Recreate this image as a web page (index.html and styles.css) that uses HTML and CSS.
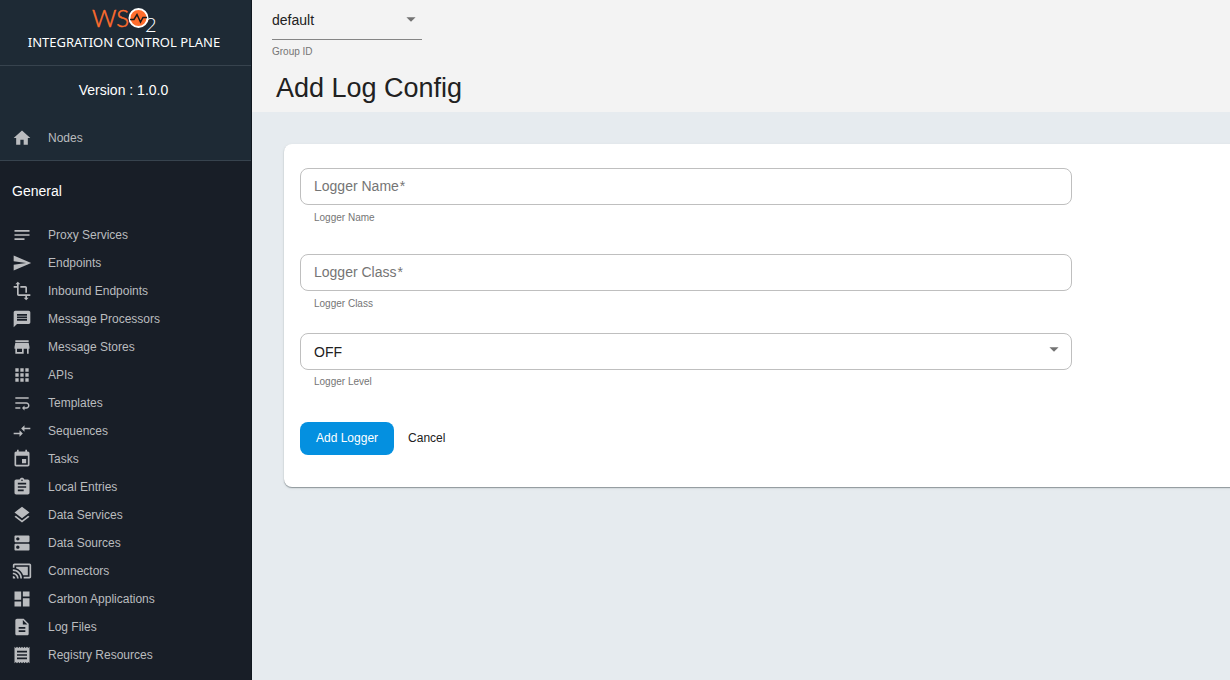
FILE: index.html
```html
<!DOCTYPE html>
<html lang="en">
<head>
<meta charset="utf-8">
<title>Add Log Config - Integration Control Plane</title>
<link rel="stylesheet" href="styles.css">
</head>
<body>
<div class="app">
  <nav class="sidebar" aria-label="Main">
    <div class="brand">
      <svg class="logo" viewBox="0 0 68 35" role="img" aria-label="WSO2">
        <text class="logo-ws" x="2" y="27">WS</text>
        <text class="logo-two" x="55" y="32">2</text>
        <circle cx="48.500" cy="18" r="9" fill="#ff6d2d" stroke="#fff" stroke-width="2"/>
        <path d="M40 19.500h4l3-5 3.500 7.500 2.500-4.500h4" fill="none" stroke="#1a1a1a" stroke-width="1.500"/>
      </svg>
      <div class="product">INTEGRATION CONTROL PLANE</div>
    </div>
    <div class="version">Version : 1.0.0</div>
    <a class="item home" href="#"><svg class="icon" viewBox="0 0 24 24"><path d="M10 20v-6h4v6h5v-8h3L12 3 2 12h3v8z"/></svg>Nodes</a>
    <h2 class="group">General</h2>
    <div class="items">
      <a class="item" href="#"><svg class="icon" viewBox="0 0 24 24"><path d="M3 18h12v-2H3v2zM3 6v2h18V6H3zm0 7h18v-2H3v2z"/></svg>Proxy Services</a>
      <a class="item" href="#"><svg class="icon" viewBox="0 0 24 24"><path d="M2.010 21L23 12 2.010 3 2 10l15 2-15 2z"/></svg>Endpoints</a>
      <a class="item" href="#"><svg class="icon" viewBox="0 0 24 24"><path d="M22 18v-2H8V4h2L7 1 4 4h2v2H2v2h4v8c0 1.100.9 2 2 2h8v2h-2l3 3 3-3h-2v-2h4zM10 8h6v6h2V8c0-1.100-.9-2-2-2h-6v2z"/></svg>Inbound Endpoints</a>
      <a class="item" href="#"><svg class="icon" viewBox="0 0 24 24"><path d="M20 2H4c-1.100 0-1.990.9-1.990 2L2 22l4-4h14c1.100 0 2-.9 2-2V4c0-1.100-.9-2-2-2zm-2 12H6v-2h12v2zm0-3H6V9h12v2zm0-3H6V6h12v2z"/></svg>Message Processors</a>
      <a class="item" href="#"><svg class="icon" viewBox="0 0 24 24"><path d="M20 4H4v2h16V4zm1 10v-2l-1-5H4l-1 5v2h1v6h10v-6h4v6h2v-6h1zm-9 4H6v-4h6v4z"/></svg>Message Stores</a>
      <a class="item" href="#"><svg class="icon" viewBox="0 0 24 24"><path d="M4 8h4V4H4v4zm6 12h4v-4h-4v4zm-6 0h4v-4H4v4zm0-6h4v-4H4v4zm6 0h4v-4h-4v4zm6-10v4h4V4h-4zm-6 4h4V4h-4v4zm6 6h4v-4h-4v4zm0 6h4v-4h-4v4z"/></svg>APIs</a>
      <a class="item" href="#"><svg class="icon" viewBox="0 0 24 24"><path d="M4 19h6v-2H4v2zM20 5H4v2h16V5zm-3 6H4v2h13.250c1.100 0 2 .9 2 2s-.9 2-2 2H15v-2l-3 3 3 3v-2h2c2.210 0 4-1.790 4-4s-1.790-4-4-4z"/></svg>Templates</a>
      <a class="item" href="#"><svg class="icon" viewBox="0 0 24 24"><path d="M9.010 14H2v2h7.010v3L13 15l-3.990-4v3zm5.980-1v-3H22V8h-7.010V5L11 9l3.990 4z"/></svg>Sequences</a>
      <a class="item" href="#"><svg class="icon" viewBox="0 0 24 24"><path d="M17 12h-5v5h5v-5zM16 1v2H8V1H6v2H5c-1.110 0-1.990.9-1.990 2L3 19c0 1.100.89 2 2 2h14c1.100 0 2-.9 2-2V5c0-1.100-.9-2-2-2h-1V1h-2zm3 18H5V8h14v11z"/></svg>Tasks</a>
      <a class="item" href="#"><svg class="icon" viewBox="0 0 24 24"><path d="M19 3h-4.180C14.400 1.840 13.300 1 12 1c-1.300 0-2.400.84-2.820 2H5c-1.100 0-2 .9-2 2v14c0 1.100.9 2 2 2h14c1.100 0 2-.9 2-2V5c0-1.100-.9-2-2-2zm-7 0c.55 0 1 .45 1 1s-.45 1-1 1-1-.45-1-1 .45-1 1-1zm2 14H7v-2h7v2zm3-4H7v-2h10v2zm0-4H7V7h10v2z"/></svg>Local Entries</a>
      <a class="item" href="#"><svg class="icon" viewBox="0 0 24 24"><path d="M11.990 18.540l-7.370-5.730L3 14.070l9 7 9-7-1.630-1.270-7.380 5.740zM12 16l7.360-5.730L21 9l-9-7-9 7 1.630 1.270L12 16z"/></svg>Data Services</a>
      <a class="item" href="#"><svg class="icon" viewBox="0 0 24 24"><path d="M20 13H4c-.55 0-1 .45-1 1v6c0 .55.45 1 1 1h16c.55 0 1-.45 1-1v-6c0-.55-.45-1-1-1zM7 19c-1.100 0-2-.9-2-2s.9-2 2-2 2 .9 2 2-.9 2-2 2zM20 3H4c-.55 0-1 .45-1 1v6c0 .55.45 1 1 1h16c.55 0 1-.45 1-1V4c0-.55-.45-1-1-1zM7 9c-1.100 0-2-.9-2-2s.9-2 2-2 2 .9 2 2-.9 2-2 2z"/></svg>Data Sources</a>
      <a class="item" href="#"><svg class="icon" viewBox="0 0 24 24"><path d="M1 18v3h3c0-1.660-1.340-3-3-3zm0-4v2c2.760 0 5 2.240 5 5h2c0-3.870-3.130-7-7-7zm18-7H5v1.630c3.960 1.280 7.090 4.410 8.370 8.370H19V7zM1 10v2c4.970 0 9 4.030 9 9h2c0-6.080-4.930-11-11-11zm20-7H3c-1.100 0-2 .9-2 2v3h2V5h18v14h-7v2h7c1.100 0 2-.9 2-2V5c0-1.100-.9-2-2-2z"/></svg>Connectors</a>
      <a class="item" href="#"><svg class="icon" viewBox="0 0 24 24"><path d="M3 13h8V3H3v10zm0 8h8v-6H3v6zm10 0h8V11h-8v10zm0-18v6h8V3h-8z"/></svg>Carbon Applications</a>
      <a class="item" href="#"><svg class="icon" viewBox="0 0 24 24"><path d="M14 2H6c-1.100 0-1.990.9-1.990 2L4 20c0 1.100.89 2 1.990 2H18c1.100 0 2-.9 2-2V8l-6-6zm2 16H8v-2h8v2zm0-4H8v-2h8v2zm-3-5V3.500L18.500 9H13z"/></svg>Log Files</a>
      <a class="item" href="#"><svg class="icon" viewBox="0 0 24 24"><path d="M18 17H6v-2h12v2zm0-4H6v-2h12v2zm0-4H6V7h12v2zM3 22l1.500-1.500L6 22l1.500-1.500L9 22l1.500-1.500L12 22l1.500-1.500L15 22l1.500-1.500L18 22l1.500-1.500L21 22V2l-1.500 1.500L18 2l-1.500 1.500L15 2l-1.500 1.500L12 2l-1.500 1.500L9 2 7.500 3.500 6 2 4.500 3.500 3 2v20z"/></svg>Registry Resources</a>
    </div>
  </nav>
  <div class="page">
    <header class="topbar">
      <div class="group-picker">
        <div class="select-wrap">
          <select class="group-select" id="group"><option>default</option></select>
          <svg class="arrow" viewBox="0 0 24 24"><path d="M7 10l5 5 5-5z"/></svg>
        </div>
        <label class="hint" for="group">Group ID</label>
      </div>
      <h1 class="title">Add Log Config</h1>
    </header>
    <main class="content">
      <form class="card">
        <div class="fields">
          <div class="field">
            <div class="control">
              <input class="box" id="name" type="text" required aria-describedby="name-hint">
              <label class="floating" for="name">Logger Name<span class="star">*</span></label>
            </div>
            <div class="hint" id="name-hint">Logger Name</div>
          </div>
          <div class="field">
            <div class="control">
              <input class="box" id="class" type="text" required aria-describedby="class-hint">
              <label class="floating" for="class">Logger Class<span class="star">*</span></label>
            </div>
            <div class="hint" id="class-hint">Logger Class</div>
          </div>
        </div>
        <div class="field level">
          <div class="control">
            <select class="box" id="level"><option>OFF</option></select>
            <svg class="arrow" viewBox="0 0 24 24"><path d="M7 10l5 5 5-5z"/></svg>
          </div>
          <label class="hint" for="level">Logger Level</label>
        </div>
        <div class="actions">
          <button class="btn primary" type="submit">Add Logger</button>
          <button class="btn" type="button">Cancel</button>
        </div>
      </form>
    </main>
  </div>
</div>
</body>
</html>
```

FILE: styles.css
```css
* { box-sizing: border-box; }

body {
  margin: 0;
  font-family: "Liberation Sans", Arial, Helvetica, sans-serif;
  font-size: 14px;
  color: #212121;
}

.app {
  display: flex;
  min-height: 100vh;
}

/* Sidebar */
.sidebar {
  flex: 0 0 252px;
  background: #181e27;
  border-right: 1px solid #10171f;
  color: #fff;
}

.brand {
  height: 66px;
  padding-right: 3px;
  display: flex;
  flex-direction: column;
  align-items: center;
  background: #1e2a35;
  border-bottom: 1px solid #37434e;
}

.logo {
  width: 68px;
  height: 35px;
  flex: none;
}

.logo-ws {
  font: 300 24px Lato, sans-serif;
  fill: #ff6d2d;
  stroke: #ff6d2d;
  stroke-width: 0.5px;
}

.logo-two {
  font: 300 20px Lato, sans-serif;
  fill: #fff;
}

.product {
  font: 13px/14px "Noto Sans", sans-serif;
  white-space: nowrap;
}

.version {
  height: 50px;
  padding-right: 4px;
  line-height: 49px;
  text-align: center;
  background: #1e2a35;
}

.item {
  display: flex;
  align-items: center;
  gap: 16px;
  height: 28px;
  padding: 0 12px;
  font-size: 12px;
  color: #babcbf;
  text-decoration: none;
}

.icon {
  width: 20px;
  height: 20px;
  flex: none;
  fill: currentColor;
}

.home {
  height: 45px;
  background: #1e2a35;
  border-bottom: 1px solid #37434e;
}

.group {
  margin: 0;
  padding: 0 12px;
  height: 60px;
  line-height: 60px;
  font-size: 14px;
  font-weight: 400;
}

/* Page */
.page {
  flex: 1;
  min-width: 0;
  overflow: hidden;
  background: #e6ebef;
}

.topbar {
  height: 112px;
  padding: 0 20px;
  background: #f3f3f3;
}

.group-picker {
  width: 150px;
}

.select-wrap,
.control {
  position: relative;
}

.group-select {
  display: block;
  width: 100%;
  height: 40px;
  padding: 0 24px 0 0;
  border: 0;
  border-bottom: 1px solid #858585;
  appearance: none;
  background: none;
  font: inherit;
  color: inherit;
}

.arrow {
  position: absolute;
  top: 8px;
  right: 0;
  width: 22px;
  height: 22px;
  fill: #737373;
  pointer-events: none;
}

.hint {
  display: block;
  font-size: 10px;
  line-height: 24px;
  color: #757575;
}

.title {
  margin: 0;
  padding-left: 4px;
  font-size: 27px;
  line-height: 48px;
  font-weight: 400;
}

.content {
  padding: 32px;
}

.card {
  min-width: 1000px;
  padding: 24px 16px 32px;
  background: #fff;
  border-radius: 8px;
  box-shadow: 0 1px 1px #8f979c, 0 1px 3px #d0d6da;
}

.fields {
  display: grid;
  gap: 23px;
  margin-bottom: 16px;
}

.field {
  max-width: 772px;
}

.field .hint {
  padding-left: 14px;
  line-height: 26px;
}

.level .hint {
  line-height: 24px;
}

.box {
  display: block;
  width: 100%;
  height: 37px;
  padding: 0 13px;
  border: 1px solid #bfbfbf;
  border-radius: 8px;
  appearance: none;
  background: #fff;
  font: inherit;
  color: inherit;
}

.floating {
  position: absolute;
  top: 1px;
  left: 14px;
  line-height: 35px;
  color: #757575;
  pointer-events: none;
}

.star {
  padding-left: 1px;
}

.control .arrow {
  top: 5px;
  right: 7px;
}

.actions {
  display: flex;
  margin-top: 28px;
}

.btn {
  height: 33px;
  padding: 0 14px 2px;
  border: 0;
  border-radius: 8px;
  background: none;
  font: inherit;
  font-size: 12px;
  color: #212121;
}

.primary {
  padding: 0 16px 2px;
  background: #0490e0;
  color: #fff;
}
```
